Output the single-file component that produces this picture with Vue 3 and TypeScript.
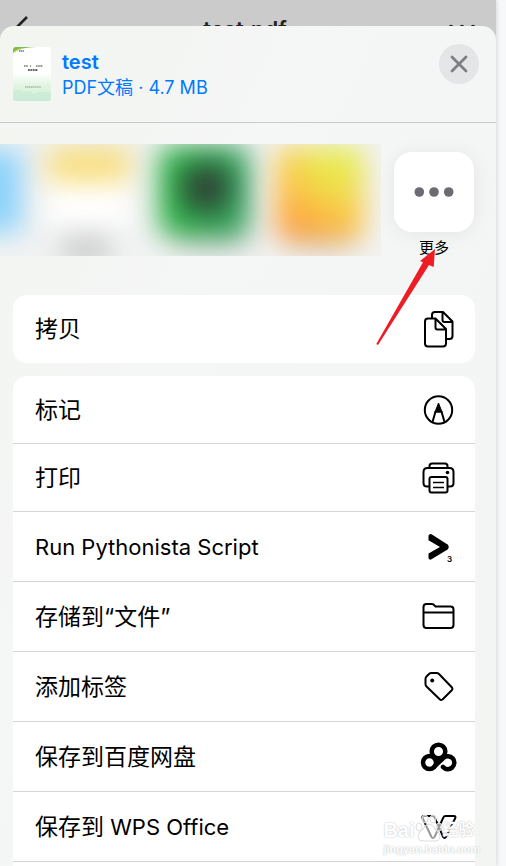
<script setup lang="ts">
interface Action {
  label: string
  icon: string
  compact?: boolean
}

const groups: Action[][] = [
  [{ label: '拷贝', icon: 'copy', compact: true }],
  [
    { label: '标记', icon: 'markup', compact: true },
    { label: '打印', icon: 'print', compact: true },
    { label: 'Run Pythonista Script', icon: 'pythonista' },
    { label: '存储到“文件”', icon: 'folder' },
    { label: '添加标签', icon: 'tag' },
    { label: '保存到百度网盘', icon: 'netdisk' },
    { label: '保存到 WPS Office', icon: 'wps' },
  ],
]

// Splits a label into Latin and Chinese runs, which are set at different sizes.
function runs(label: string): string[] {
  return label.match(/[\x20-\x7e]+|[^\x20-\x7e]+/g) ?? []
}

function isLatin(run: string): boolean {
  return /^[\x20-\x7e]+$/.test(run)
}
</script>

<template>
  <div class="screen">
    <header class="navbar">
      <svg class="back" width="16" height="24" viewBox="0 0 16 24" aria-hidden="true">
        <path d="M13 2 3 12 13 22" fill="none" stroke="#222" stroke-width="2.600" />
      </svg>
      <span class="nav-title">test.pdf</span>
      <svg class="nav-more" width="28" height="6" viewBox="0 0 28 6" aria-hidden="true">
        <circle cx="3" cy="3" r="2.200" /><circle cx="14" cy="3" r="2.200" /><circle cx="25" cy="3" r="2.200" />
      </svg>
    </header>

    <main class="sheet">
      <section class="doc">
        <svg class="thumb" width="38" height="54" viewBox="0 0 38 54" aria-hidden="true">
          <defs>
            <linearGradient id="page" x1="0" y1="0" x2="0" y2="1">
              <stop offset="0" stop-color="#fff" />
              <stop offset="0.500" stop-color="#fdfffd" />
              <stop offset="0.720" stop-color="#e0f4e0" />
              <stop offset="1" stop-color="#d3efe0" />
            </linearGradient>
          </defs>
          <rect width="38" height="54" rx="3" fill="url(#page)" />
          <path d="M0 6V3Q0 0 3 0h20Q8 0 0 6Z" fill="#79bd4c" />
          <path d="M1 5Q4 2 9 1.500" fill="none" stroke="#e5d44d" stroke-width="1" />
          <path d="M6 4h5" stroke="#3e8fc4" stroke-width="1.500" stroke-dasharray="1.500 .4" />
          <path d="M11 19h4m2 0h1m5 0h7" stroke="#333" stroke-width="1.200" stroke-dasharray="1.600 .6" />
          <path d="M15 23h10" stroke="#333" stroke-width="1.400" stroke-dasharray="1.800 .6" />
          <path d="M12 40h16" stroke="#8aa398" stroke-width="1.100" stroke-dasharray="1.500 .4" />
          <path d="M0 44q6-3 10 1 6-3 11 2 8-4 17-1v5q0 3-3 3H3q-3 0-3-3Z" fill="#bfe7cb" opacity=".5" />
        </svg>
        <div class="doc-text">
          <h1>test</h1>
          <p>PDF文稿 · 4.7 MB</p>
        </div>
        <button class="close" type="button" aria-label="关闭">
          <svg width="18" height="18" viewBox="0 0 18 18" aria-hidden="true">
            <path d="M2 2 16 16M16 2 2 16" stroke="#7d7d82" stroke-width="2.800" stroke-linecap="round" />
          </svg>
        </button>
      </section>

      <section class="apps">
        <div class="blurred">
          <i class="blob blue"></i>
          <i class="blob notes"></i>
          <i class="blob gray"></i>
          <i class="blob green"></i>
          <i class="blob dark"></i>
          <i class="blob orange"></i>
        </div>
        <button class="more" type="button">
          <span class="more-tile">
            <svg width="40" height="12" viewBox="0 0 40 12" aria-hidden="true">
              <circle cx="5.300" cy="6" r="4.800" /><circle cx="20" cy="6" r="4.800" /><circle cx="34.700" cy="6" r="4.800" />
            </svg>
          </span>
          <span class="more-label">更多</span>
        </button>
      </section>

      <div class="groups">
        <ul v-for="(group, index) in groups" :key="index" class="group">
          <li v-for="action in group" :key="action.label">
            <button class="action" :class="{ compact: action.compact }" type="button">
              <span class="label"><span v-for="run in runs(action.label)" :key="run" :class="{ latin: isLatin(run) }">{{ run }}</span></span>
              <svg class="icon" width="40" height="40" viewBox="0 0 40 40" aria-hidden="true">
                <g v-if="action.icon === 'copy'">
                  <path d="M13 9V6q0-3 3-3h8l9.500 9.500V27q0 3-3 3H27M23.500 3v8q0 2 2 2h8" />
                  <path d="M9 9.500h7.500L27 20v14.500q0 3-3 3H9q-3 0-3-3v-22q0-3 3-3ZM16.500 9.500v9q0 2 2 2H27" />
                </g>
                <g v-else-if="action.icon === 'markup'">
                  <circle cx="19.500" cy="20" r="13.700" />
                  <path d="m13.500 32 3-10.500h6L25.500 32" />
                  <path d="m19.500 13 3.500 9h-7Z" fill="#000" stroke-width="1" />
                </g>
                <g v-else-if="action.icon === 'print'">
                  <path d="M10.500 28.500H8q-3.500 0-3.500-3.500V14q0-4 4-4h22q4 0 4 4v11q0 3.500-3.500 3.500h-2.500" />
                  <path d="M10.500 10V8q0-2.500 2.500-2.500h13q2.500 0 2.500 2.500v2" />
                  <rect x="10.500" y="19" width="18" height="15.500" rx="2" />
                  <path d="M14 24.500h11M14 29.500h11" stroke-width="1.700" />
                  <circle cx="28.500" cy="14.500" r="1.800" class="solid" />
                </g>
                <g v-else-if="action.icon === 'pythonista'">
                  <path d="M9.500 8.500v4.800l11.500 6.700L9.500 26.500v4.800q1 2.200 3 1l16.500-10q1.500-2.500 0-4.500L12.500 7.200q-2-.8-3 1.300Z" class="solid" />
                  <text x="28" y="35" class="subscript">3</text>
                </g>
                <g v-else-if="action.icon === 'folder'">
                  <path d="M4.500 28V10q0-3 3-3h5.500q1.500 0 3 2l.5.500h15q3 0 3 3V28q0 3-3 3h-24q-3 0-3-3ZM4.500 15.500h30" />
                </g>
                <g v-else-if="action.icon === 'tag'">
                  <path d="M6.500 17v-5q0-1.500 1-2.500l2.500-2.500q1-1 2.500-1h5q1.500 0 2.500 1l13 13.500q1 1.500 0 2.500L23.500 32.500q-1.500 1-2.500 0L7.500 19.500q-1-1-1-2.500Z" />
                  <circle cx="13.200" cy="13.500" r="2" class="solid" />
                </g>
                <g v-else-if="action.icon === 'netdisk'" class="bold">
                  <circle cx="10.500" cy="25.500" r="6.500" />
                  <circle cx="19.500" cy="14.500" r="6.800" />
                  <path d="M15 30 24.500 20.800A6.500 6.500 0 1 1 24 30" />
                </g>
                <g v-else>
                  <path d="M5 9h8.500q1.500 0 2 1.200L20 20l-4.500 10q-1.500 2-3 0L3.500 11q-.7-2 1.500-2Z" />
                  <path d="M20 20 24.500 10.200q.5-1.200 2-1.200H35q2 0 1.300 2L27 30q-1.500 2-3 0Z" />
                </g>
              </svg>
            </button>
          </li>
        </ul>
      </div>
    </main>

    <svg class="arrow" width="62" height="100" viewBox="0 0 62 100" aria-hidden="true">
      <path d="M.3 96 2 97 53 17l4.700 2L59 1 44 13l3 1.300Z" fill="#ee1c24" />
    </svg>

    <div class="watermark">
      <div class="mark-name">
        <span>Bai</span>
        <svg width="28" height="28" viewBox="0 0 28 28" aria-hidden="true">
          <ellipse cx="4" cy="13" rx="3" ry="4" /><ellipse cx="10" cy="5" rx="3" ry="4" />
          <ellipse cx="18" cy="5" rx="3" ry="4" /><ellipse cx="24" cy="13" rx="3" ry="4" />
          <path d="M14 10q4 0 6 5l4 4q3 8-4 8H8q-7 0-4-8l4-4q2-5 6-5Z" />
        </svg>
        <span>经验</span>
      </div>
      <div class="mark-url">jingyan.baidu.com</div>
    </div>
  </div>
</template>

<style>
body {
  background: #f7f8fa;
}
</style>

<style scoped>
.screen {
  position: relative;
  height: 100vh;
  margin-right: 10px;
  overflow: hidden;
  display: flex;
  flex-direction: column;
  background: #cbcbcb;
  box-shadow: 0 0 5px rgba(0, 0, 0, 0.18);
  font-family: Inter, "Noto Sans CJK SC", sans-serif;
  color: #000;
}

button {
  border: 0;
  padding: 0;
  font: inherit;
  color: inherit;
  background: none;
}

.navbar {
  flex: none;
  height: 26px;
  padding: 15px 20px 0 14px;
  box-sizing: border-box;
  display: grid;
  grid-template-columns: 28px 1fr 28px;
  align-items: start;
}

.nav-title {
  font-size: 22px;
  line-height: 28px;
  font-weight: 600;
  text-align: center;
  color: #222;
}

.nav-more {
  margin-top: 9px;
  fill: #222;
}

.sheet {
  position: relative;
  flex: 1;
  min-height: 0;
  overflow: hidden;
  border-radius: 14px 14px 0 0;
  background: linear-gradient(115deg, #f2f5f0 0%, #f5f6f6 35%, #f4f6f6 60%, #f3f5f3 100%);
}

.doc {
  height: 96px;
  padding: 0 17px 0 13px;
  display: flex;
  align-items: center;
  border-bottom: 1px solid #c9cacb;
}

.thumb {
  margin-right: 11px;
}

.doc-text {
  flex: 1;
  padding-top: 2px;
  color: #007aff;
}

h1,
p {
  margin: 0;
  font-size: 20px;
  line-height: 25px;
  font-weight: 600;
}

p {
  font-size: 18px;
  font-weight: 400;
}

.close {
  width: 40px;
  height: 40px;
  margin-bottom: 20px;
  border-radius: 50%;
  display: grid;
  place-items: center;
  background: #e4e5e7;
}

.apps {
  display: flex;
  justify-content: space-between;
  padding: 21px 22px 35px 0;
}

.blurred {
  position: relative;
  width: 381px;
  height: 112px;
  overflow: hidden;
  background: #f2f3f3;
}

.blob {
  position: absolute;
  filter: blur(14px);
}

.blue {
  left: -50px;
  top: 6px;
  width: 72px;
  height: 82px;
  background: #8bd2fa;
}

.notes {
  left: 48px;
  top: 4px;
  width: 82px;
  height: 80px;
  background: linear-gradient(#f8dc77 0 40%, #fff 44%);
}

.gray {
  left: 62px;
  top: 94px;
  width: 48px;
  height: 24px;
  background: #c4c4c4;
}

.green {
  left: 159px;
  top: 2px;
  width: 90px;
  height: 90px;
  border-radius: 12px;
  background: linear-gradient(90deg, #2bb543, #35a05f);
  box-shadow: 6px 18px 12px -10px #8aa18e;
}

.dark {
  left: 182px;
  top: 20px;
  width: 48px;
  height: 48px;
  border-radius: 20px;
  background: #2f4235;
}

.orange {
  left: 276px;
  top: 3px;
  width: 88px;
  height: 92px;
  border-radius: 8px;
  background: radial-gradient(circle at 70% 15%, #e3f04b, transparent 55%), linear-gradient(35deg, #ff9138, #fbc948 50%, #f5dc5a);
  box-shadow: 0 18px 12px -12px #b89a80;
}

.more {
  width: 80px;
  padding-top: 8px;
  display: flex;
  flex-direction: column;
  align-items: center;
}

.more-tile {
  width: 80px;
  height: 80px;
  border-radius: 18px;
  display: grid;
  place-items: center;
  background: #fff;
  fill: #6b6b72;
  box-shadow: 0 2px 20px rgba(0, 0, 0, 0.07);
}

.more-label {
  margin-top: 4px;
  font-size: 15px;
  line-height: 24px;
}

.groups {
  display: flex;
  flex-direction: column;
  gap: 13px;
  padding: 0 21px 0 13px;
}

.group {
  margin: 0;
  padding: 0;
  list-style: none;
  border-radius: 14px;
  background: #fff;
}

.group:last-child {
  padding-bottom: 70px;
}

.action {
  width: 100%;
  height: 70px;
  padding: 0 16px 0 22px;
  display: flex;
  align-items: center;
  justify-content: space-between;
  border-bottom: 1px solid #d5d5d7;
  font-size: 23px;
  line-height: 32px;
}

.action.compact {
  height: 68px;
}

.group:first-child .action {
  border-bottom: 0;
}

.label {
  white-space: pre;
}

.latin {
  font-size: 22px;
}

.icon {
  fill: none;
  stroke: #000;
  stroke-width: 2;
  stroke-linejoin: round;
}

.icon .solid {
  fill: #000;
  stroke: none;
}

.icon .bold {
  stroke-width: 4.500;
  stroke-linecap: round;
}

.subscript {
  fill: #000;
  stroke: none;
  font-size: 8px;
  font-weight: 600;
}

.arrow {
  position: absolute;
  left: 376px;
  top: 248px;
}

.watermark {
  position: absolute;
  right: 16px;
  bottom: 10px;
  color: #fff;
  font-family: "Liberation Sans", "Noto Sans CJK SC", sans-serif;
  font-weight: 700;
  text-shadow: 0 0 1px #c4c4c4, 0 0 2px #d4d4d4;
}

.mark-name {
  display: flex;
  align-items: flex-end;
  font-size: 20px;
  line-height: 24px;
}

.mark-name span:last-child {
  font-size: 16px;
}

.mark-name svg {
  fill: rgba(255, 255, 255, 0.6);
  stroke: #ddd;
  stroke-width: 1;
}

.mark-url {
  font-size: 11px;
  line-height: 14px;
}
</style>
